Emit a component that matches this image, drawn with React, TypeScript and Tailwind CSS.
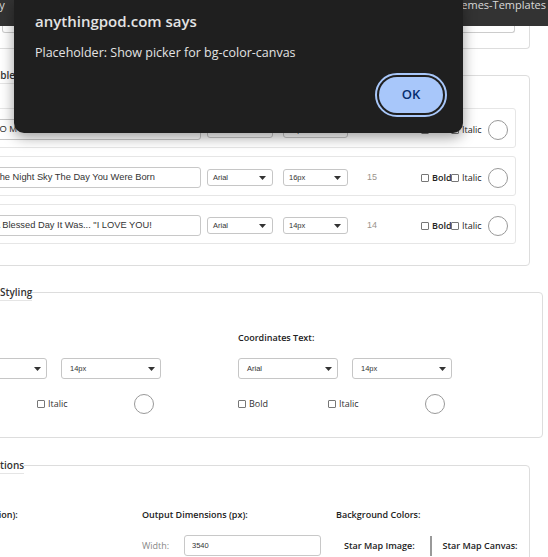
import React from "react";

function Caret() {
  return (
    <svg width="7" height="4" viewBox="0 0 7 4" className="shrink-0">
      <path d="M0 0h7L3.5 4z" fill="#333" />
    </svg>
  );
}

function Select({ value, className }: { value: string; className: string }) {
  return (
    <div
      className={`flex items-center justify-between rounded-[3px] border border-[#c6c6c6] bg-white font-['Liberation_Sans',Arial,sans-serif] text-[7.5px] text-[#333] ${className}`}
    >
      <span>{value}</span>
      <Caret />
    </div>
  );
}

function Box() {
  return <span className="inline-block h-[8px] w-[8px] shrink-0 rounded-[1px] border border-[#777] bg-white" />;
}

function Swatch() {
  return <span className="inline-block h-[20px] w-[20px] shrink-0 rounded-full border border-[#999] bg-white" />;
}

function TextRow({ text, size, num }: { text: string; size: string; num: string }) {
  return (
    <div className="flex h-[40px] items-center rounded-[3px] border border-[#e6e6e6] pl-[40px] pt-[3px]">
      <div className="flex h-[21px] w-[213px] shrink-0 items-center overflow-hidden whitespace-nowrap rounded-[3px] border border-[#c8c8c8] pl-[5px] font-['Liberation_Sans',Arial,sans-serif] text-[9.3px] text-[#333]">
        {text}
      </div>
      <Select value="Arial" className="ml-[6px] h-[17px] w-[66px] shrink-0 pl-[5px] pr-[6px]" />
      <Select value={size} className="ml-[10px] h-[17px] w-[65px] shrink-0 pl-[5px] pr-[6px]" />
      <span className="ml-[19px] w-[54px] shrink-0 font-['Liberation_Sans',Arial,sans-serif] text-[9px] text-[#9b948c]">
        {num}
      </span>
      <span className="flex items-center text-[9px] text-[#222]">
        <Box />
        <span className="ml-[3px] w-[19px] font-semibold">Bold</span>
        <Box />
        <span className="ml-[3px] w-[26px]">Italic</span>
      </span>
      <Swatch />
    </div>
  );
}

function StyleCol({ label, font, size }: { label: string; font: string; size: string }) {
  return (
    <div className="w-[291px] shrink-0">
      <div className="text-[9px] font-semibold leading-[14px] text-[#222]">{label}</div>
      <div className="mt-[13px] flex gap-[14px]">
        <Select value={font} className="h-[21px] w-[100px] pl-[8px] pr-[5px]" />
        <Select value={size} className="h-[21px] w-[100px] pl-[8px] pr-[5px]" />
      </div>
      <div className="mt-[15px] flex h-[20px] items-center text-[9px] text-[#333]">
        <span className="flex w-[90px] items-center">
          <Box />
          <span className="ml-[3px]">Bold</span>
        </span>
        <span className="flex w-[97px] items-center">
          <Box />
          <span className="ml-[3px]">Italic</span>
        </span>
        <Swatch />
      </div>
    </div>
  );
}

export default function App() {
  return (
    <div className="relative h-[557px] w-[548px] overflow-hidden bg-white font-['Open_Sans',sans-serif] text-[#333]">
      {/* top nav, scrolled mostly out of view */}
      <div className="flex h-[26px] justify-between overflow-hidden bg-[#333] text-[11px] leading-[12px] text-[#dadada]">
        <span className="-ml-[31px] -mt-[1px]">Gallery</span>
        <span className="-mt-[1px] pr-[2px]">Themes-Templates</span>
      </div>

      <div className="-ml-[68px] w-[598px]">
        <div className="h-[23px] rounded-b-[4px] border-x border-b border-[#ddd]">
          <div className="ml-[69px] mr-[14px] h-[7px] rounded-b-[3px] border-x border-b border-[#ccc]" />
        </div>

        <fieldset className="mt-[18px] rounded-[4px] border border-[#ddd] pb-[21px] pl-[14px] pr-[13px]">
          <legend className="ml-[29px] border-b border-[#e5e5e5] text-[10px] font-semibold leading-[16px] text-[#333]">
            Editable
          </legend>
          <div className="flex flex-col gap-[8px] pt-[24px]">
            <TextRow text="TO MY WONDERFUL MOM" size="18px" num="18" />
            <TextRow text="The Night Sky The Day You Were Born" size="16px" num="15" />
            <TextRow text={'A Blessed Day It Was... "I LOVE YOU!'} size="14px" num="14" />
          </div>
        </fieldset>

        <fieldset className="mt-[18px] rounded-[4px] border border-[#ddd] pb-[23px] pl-[14px] pr-[13px]">
          <legend className="ml-[53px] border-b border-[#e5e5e5] text-[10px] font-semibold leading-[16px] text-[#333]">
            Styling
          </legend>
          <div className="flex pt-[30px]">
            <StyleCol label="Title Text:" font="Arial" size="14px" />
            <StyleCol label="Coordinates Text:" font="Arial" size="14px" />
          </div>
        </fieldset>

        <fieldset className="mt-[19px] rounded-[4px] border border-[#ddd] pb-[20px] pl-[14px] pr-[13px]">
          <legend className="ml-[39px] border-b border-[#e5e5e5] text-[10px] font-semibold leading-[16px] text-[#333]">
            Options
          </legend>
          <div className="flex pt-[34px] text-[9px]">
            <div className="w-[195px] shrink-0">
              <div className="-ml-[3px] font-semibold leading-[14px] text-[#222]">Size (Resolution):</div>
            </div>
            <div className="w-[194px] shrink-0">
              <div className="font-semibold leading-[14px] text-[#222]">Output Dimensions (px):</div>
              <div className="mt-[13px] flex items-center">
                <span className="w-[42px] text-[#888]">Width:</span>
                <div className="flex h-[21px] w-[137px] items-center rounded-[3px] border border-[#c8c8c8] pl-[7px] font-['Liberation_Sans',Arial,sans-serif] text-[7.5px] text-[#333]">
                  3540
                </div>
              </div>
            </div>
            <div className="shrink-0">
              <div className="font-semibold leading-[14px] text-[#222]">Background Colors:</div>
              <div className="mt-[13px] flex h-[21px] items-center pl-[8px] font-semibold text-[#222]">
                <span>Star Map Image:</span>
                <span className="ml-[15px] h-[20px] w-[2px] bg-[#999]" />
                <span className="ml-[11px]">Star Map Canvas:</span>
              </div>
            </div>
          </div>
        </fieldset>
      </div>

      {/* browser alert */}
      <div className="absolute left-[14px] top-0 h-[133px] w-[449px] rounded-b-[10px] bg-[#1f1f1f] text-[#e3e3e3] shadow-[0_4px_14px_rgba(0,0,0,0.4)]">
        <div className="pl-[21px] pt-[10px] text-[15px] font-semibold leading-[22px]">anythingpod.com says</div>
        <div className="mt-[12px] pl-[21px] text-[12.5px] leading-[18px]">Placeholder: Show picker for bg-color-canvas</div>
        <div className="mt-[15px] flex justify-end pr-[20px]">
          <button className="h-[36px] w-[64px] rounded-full bg-[#a8c7fa] text-[13px] font-semibold text-[#062e6f] outline-2 outline-offset-2 outline-[#a8c7fa] outline-solid">
            OK
          </button>
        </div>
      </div>
    </div>
  );
}
